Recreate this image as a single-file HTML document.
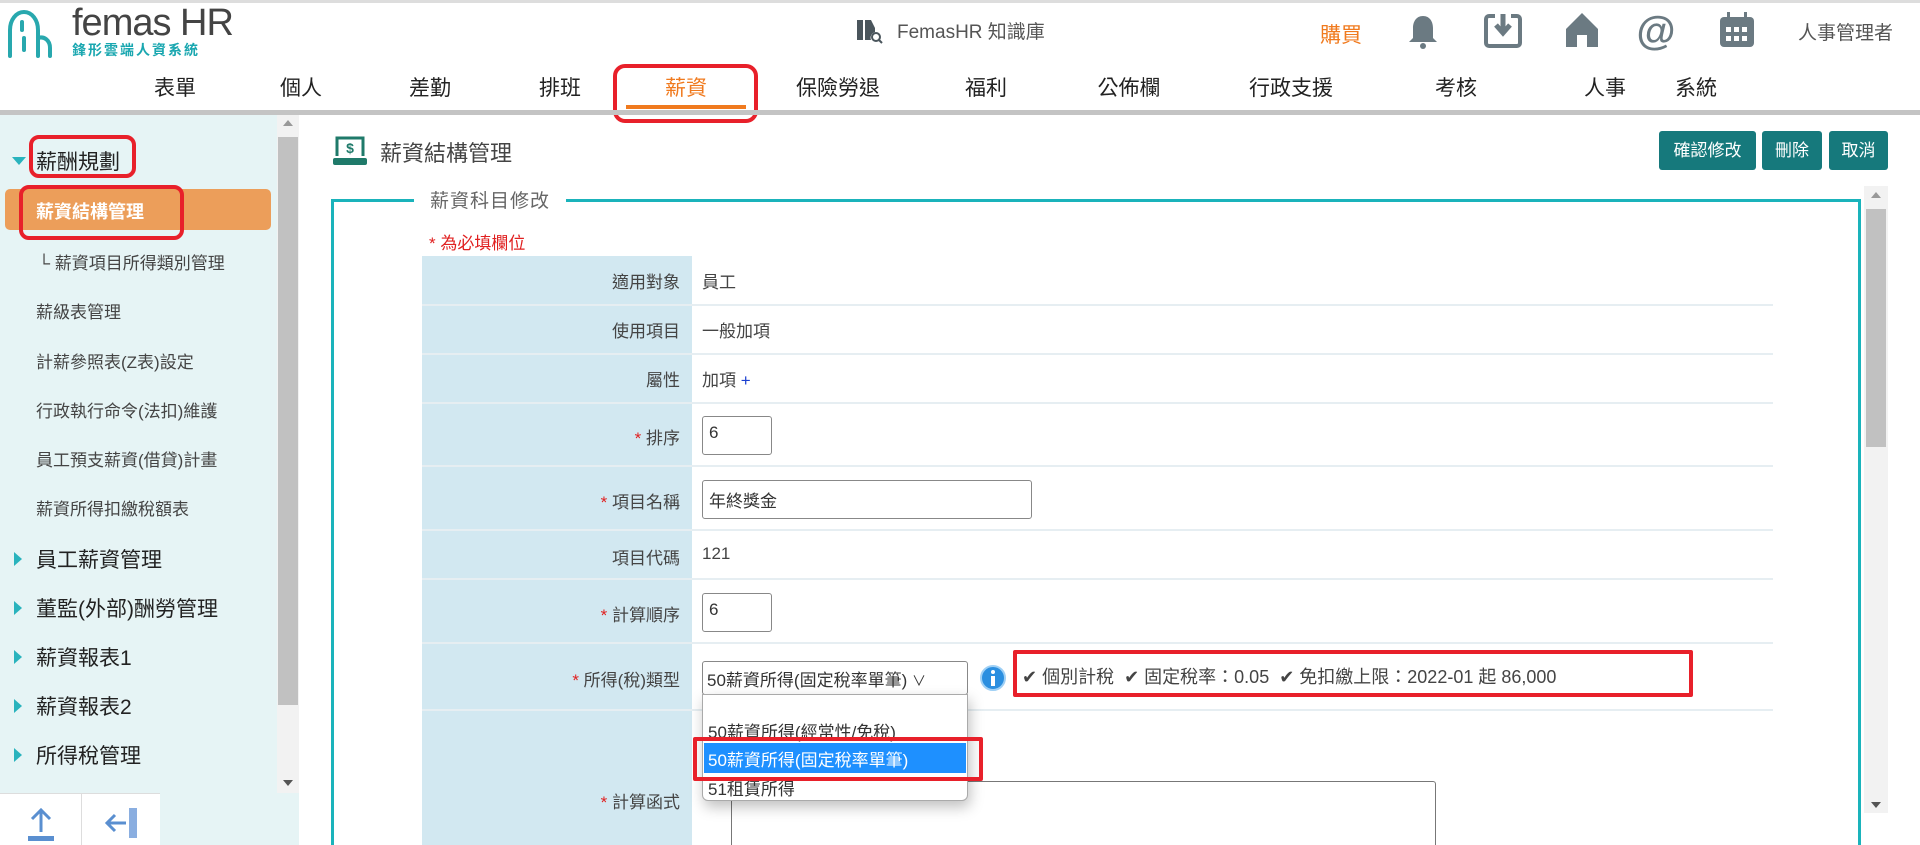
<!DOCTYPE html>
<html><head><meta charset="utf-8"><style>
*{margin:0;padding:0;box-sizing:border-box}
html,body{width:1920px;height:845px;overflow:hidden}
body{background:#fff;font-family:"Liberation Sans","Noto Sans CJK TC",sans-serif;color:#333}
#w{position:relative;width:1920px;height:845px;overflow:hidden}
.a{position:absolute;white-space:nowrap}
.nav{font-size:21px;color:#222;top:72px;transform:translateX(-50%)}
.side{font-size:17px;color:#444;left:36px}
.grp{font-size:21px;color:#222;left:36px}
.grp:before{content:"";position:absolute;left:-22px;top:8px;border-left:8px solid #29b3bd;border-top:7px solid transparent;border-bottom:7px solid transparent}
.grp.open:before{left:-24px;top:11px;border-top:8px solid #29b3bd;border-left:7px solid transparent;border-right:7px solid transparent;border-bottom:0}
.lbl{font-size:17px;color:#444;right:1240px;text-align:right}
.val{font-size:17px;color:#444;left:702px}
.st{color:#e02020}
.inp{position:absolute;border:1px solid #888;border-radius:3px;background:#fff;font-size:17px;padding:6px 6px;color:#333}
.btn{position:absolute;top:131px;height:39px;background:#16797c;color:#fff;font-size:17px;border-radius:3px;text-align:center;line-height:39px}
.red{position:absolute;border:4px solid #e8202a;border-radius:6px}
</style></head><body><div id="w">
<div class="a" style="left:0;top:0;width:1920px;height:3px;background:#ddd"></div>
<svg class="a" style="left:4px;top:8px" width="56" height="52" viewBox="0 0 56 52"><path d="M6 48V22M6 22c0-10 6-18 14-18s14 8 14 18v26M18 14v8M20 30v12M34 30c6-2 12 2 12 10v8" stroke="#28a8ae" stroke-width="4" fill="none" stroke-linecap="round"/></svg>
<div class="a" style="left:72px;top:2px;font-size:38px;color:#444;letter-spacing:-1px">femas HR</div>
<div class="a" style="left:72px;top:40px;font-size:14px;color:#1aa7b0;font-weight:bold;letter-spacing:2px">鋒形雲端人資系統</div>
<svg class="a" style="left:855px;top:16px" width="28" height="28" viewBox="0 0 28 28"><path d="M2 4h6v20H2zM10 4h6l4 8v4a6 6 0 0 0-4 8h-6z" fill="#4a555c"/><circle cx="21" cy="21" r="4" stroke="#4a555c" stroke-width="2" fill="none"/><path d="M24 24l3 3" stroke="#4a555c" stroke-width="2"/></svg>
<div class="a" style="left:897px;top:17px;font-size:19px;color:#555">FemasHR 知識庫</div>
<div class="a" style="left:1320px;top:19px;font-size:21px;color:#f07a1e">購買</div>
<svg class="a" style="left:1407px;top:14px" width="32" height="36" viewBox="0 0 32 36"><path d="M16 2c-7 0-10 6-10 12v10l-4 4h28l-4-4V14c0-6-3-12-10-12z" fill="#6b7a82"/><circle cx="16" cy="32" r="3" fill="#6b7a82"/></svg>
<svg class="a" style="left:1484px;top:12px" width="38" height="36" viewBox="0 0 38 36"><path d="M11 4H5a3 3 0 0 0-3 3v24a3 3 0 0 0 3 3h28a3 3 0 0 0 3-3V7a3 3 0 0 0-3-3h-6" stroke="#6b7a82" stroke-width="4" fill="none"/><path d="M19 2v16M12 13l7 8 7-8" stroke="#6b7a82" stroke-width="5" fill="none"/></svg>
<svg class="a" style="left:1563px;top:11px" width="38" height="38" viewBox="0 0 38 38"><path d="M19 2L3 18v18h11V24h10v12h11V18z" fill="#6b7a82"/></svg>
<svg class="a" style="left:1636px;top:11px" width="40" height="40" viewBox="0 0 40 40"><text x="20" y="33" text-anchor="middle" font-size="40" font-weight="bold" fill="#6b7a82" font-family="Liberation Sans">@</text></svg>
<svg class="a" style="left:1718px;top:11px" width="38" height="38" viewBox="0 0 38 38"><rect x="2" y="6" width="34" height="30" rx="4" fill="#6b7a82"/><rect x="9" y="1" width="3" height="8" fill="#6b7a82"/><rect x="26" y="1" width="3" height="8" fill="#6b7a82"/><g fill="#fff"><rect x="8" y="16" width="5" height="5"/><rect x="16" y="16" width="5" height="5"/><rect x="24" y="16" width="5" height="5"/><rect x="8" y="25" width="5" height="5"/><rect x="16" y="25" width="5" height="5"/><rect x="24" y="25" width="5" height="5"/></g></svg>
<div class="a" style="left:1798px;top:18px;font-size:19px;color:#555">人事管理者</div>
<div class="a nav" style="left:175px">表單</div>
<div class="a nav" style="left:301px">個人</div>
<div class="a nav" style="left:430px">差勤</div>
<div class="a nav" style="left:560px">排班</div>
<div class="a nav" style="left:686px;color:#f07a1e">薪資</div>
<div class="a nav" style="left:838px">保險勞退</div>
<div class="a nav" style="left:986px">福利</div>
<div class="a nav" style="left:1129px">公佈欄</div>
<div class="a nav" style="left:1291px">行政支援</div>
<div class="a nav" style="left:1456px">考核</div>
<div class="a nav" style="left:1605px">人事</div>
<div class="a nav" style="left:1696px">系統</div>
<div class="a" style="left:626px;top:105px;width:120px;height:4px;background:#f07a1e"></div>
<div class="red" style="left:613px;top:64px;width:145px;height:59px;border-radius:12px"></div>
<div class="a" style="left:0;top:110px;width:1920px;height:5px;background:#c4c4c4"></div>
<div class="a" style="left:0;top:115px;width:299px;height:730px;background:#e6f4f5"></div>
<div class="a" style="left:277px;top:115px;width:22px;height:678px;background:#f2f2f2"></div>
<div class="a" style="left:278px;top:137px;width:20px;height:568px;background:#c1c1c1"></div>
<div class="a" style="left:283px;top:120px;border-bottom:6px solid #999;border-left:5px solid transparent;border-right:5px solid transparent"></div>
<div class="a" style="left:283px;top:780px;border-top:6px solid #555;border-left:5px solid transparent;border-right:5px solid transparent"></div>
<div class="a grp open" style="top:146px">薪酬規劃</div>
<div class="red" style="left:29px;top:135px;width:107px;height:43px;border-radius:10px"></div>
<div class="a" style="left:5px;top:189px;width:266px;height:41px;background:#ec9e5a;border-radius:5px"></div>
<div class="a" style="left:36px;top:198px;font-size:18px;color:#fff;font-weight:bold">薪資結構管理</div>
<div class="red" style="left:19px;top:185px;width:165px;height:55px;border-radius:10px"></div>
<div class="a side" style="top:249px;left:38px">└ 薪資項目所得類別管理</div>
<div class="a side" style="top:298px">薪級表管理</div>
<div class="a side" style="top:348px">計薪參照表(Z表)設定</div>
<div class="a side" style="top:397px">行政執行命令(法扣)維護</div>
<div class="a side" style="top:446px">員工預支薪資(借貸)計畫</div>
<div class="a side" style="top:495px">薪資所得扣繳稅額表</div>
<div class="a grp" style="top:544px">員工薪資管理</div>
<div class="a grp" style="top:593px">董監(外部)酬勞管理</div>
<div class="a grp" style="top:642px">薪資報表1</div>
<div class="a grp" style="top:691px">薪資報表2</div>
<div class="a grp" style="top:740px">所得稅管理</div>
<div class="a grp" style="top:789px;height:4px;overflow:hidden">基本設定</div>
<div class="a" style="left:0;top:793px;width:160px;height:52px;background:#fff;border-top:1px solid #ddd"></div>
<div class="a" style="left:81px;top:793px;width:1px;height:52px;background:#ddd"></div>
<svg class="a" style="left:26px;top:808px" width="30" height="34" viewBox="0 0 30 34"><path d="M15 2v22M6 11l9-9 9 9" stroke="#5a8fd0" stroke-width="3" fill="none"/><rect x="2" y="28" width="26" height="5" fill="#5a8fd0"/></svg>
<svg class="a" style="left:104px;top:806px" width="36" height="34" viewBox="0 0 36 34"><path d="M4 17h18M11 9l-8 8 8 8" stroke="#5a8fd0" stroke-width="3" fill="none"/><rect x="25" y="2" width="8" height="30" fill="#8aaee0"/></svg>
<svg class="a" style="left:332px;top:134px" width="36" height="32" viewBox="0 0 36 32"><path d="M5 22V4h26v18" stroke="#1f7a6a" stroke-width="3" fill="none"/><rect x="1" y="24" width="34" height="7" rx="2" fill="#1f7a6a"/><text x="18" y="19" text-anchor="middle" font-size="14" font-weight="bold" fill="#1f7a6a" font-family="Liberation Sans">$</text></svg>
<div class="a" style="left:380px;top:136px;font-size:22px;color:#444">薪資結構管理</div>
<div class="btn" style="left:1659px;width:97px">確認修改</div>
<div class="btn" style="left:1762px;width:60px">刪除</div>
<div class="btn" style="left:1829px;width:59px">取消</div>
<div class="a" style="left:331px;top:199px;width:1530px;height:646px;border:3px solid #1ab3bb;border-bottom:0"></div>
<div class="a" style="left:414px;top:186px;background:#fff;padding:0 16px;font-size:19px;color:#666;letter-spacing:1px">薪資科目修改</div>
<div class="a" style="left:1864px;top:186px;width:24px;height:627px;background:#f2f2f2"></div>
<div class="a" style="left:1866px;top:209px;width:20px;height:238px;background:#c1c1c1"></div>
<div class="a" style="left:1871px;top:192px;border-bottom:6px solid #999;border-left:5px solid transparent;border-right:5px solid transparent"></div>
<div class="a" style="left:1871px;top:802px;border-top:6px solid #555;border-left:5px solid transparent;border-right:5px solid transparent"></div>
<div class="a" style="left:429px;top:229px;font-size:17px;color:#e02020">* 為必填欄位</div>
<div class="a" style="left:422px;top:256px;width:270px;height:589px;background:#d2e8f1"></div>
<div class="a" style="left:422px;top:304px;width:1351px;height:2px;background:#e6eef2"></div>
<div class="a" style="left:422px;top:353px;width:1351px;height:2px;background:#e6eef2"></div>
<div class="a" style="left:422px;top:402px;width:1351px;height:2px;background:#e6eef2"></div>
<div class="a" style="left:422px;top:465px;width:1351px;height:2px;background:#e6eef2"></div>
<div class="a" style="left:422px;top:529px;width:1351px;height:2px;background:#e6eef2"></div>
<div class="a" style="left:422px;top:578px;width:1351px;height:2px;background:#e6eef2"></div>
<div class="a" style="left:422px;top:642px;width:1351px;height:2px;background:#e6eef2"></div>
<div class="a" style="left:422px;top:709px;width:1351px;height:2px;background:#e6eef2"></div>
<div class="a lbl" style="top:268px">適用對象</div><div class="a val" style="top:268px">員工</div>
<div class="a lbl" style="top:317px">使用項目</div><div class="a val" style="top:317px">一般加項</div>
<div class="a lbl" style="top:366px">屬性</div><div class="a val" style="top:366px">加項 <span style="color:#1a3fd0">+</span></div>
<div class="a lbl" style="top:424px"><span class="st">*</span> 排序</div>
<div class="inp" style="left:702px;top:416px;width:70px;height:39px">6</div>
<div class="a lbl" style="top:488px"><span class="st">*</span> 項目名稱</div>
<div class="inp" style="left:702px;top:480px;width:330px;height:39px">年終獎金</div>
<div class="a lbl" style="top:544px">項目代碼</div><div class="a val" style="top:544px">121</div>
<div class="a lbl" style="top:601px"><span class="st">*</span> 計算順序</div>
<div class="inp" style="left:702px;top:593px;width:70px;height:39px">6</div>
<div class="a lbl" style="top:666px"><span class="st">*</span> 所得(稅)類型</div>
<div class="inp" style="left:702px;top:661px;width:266px;height:34px;padding:4px 4px;font-size:17px">50薪資所得(固定稅率單筆) <span style="font-size:14px">&#8744;</span></div>
<svg class="a" style="left:979px;top:664px" width="28" height="28" viewBox="0 0 28 28"><circle cx="14" cy="14" r="12" fill="#2b8fe0" stroke="#9fd0f5" stroke-width="2"/><circle cx="14" cy="8" r="2" fill="#fff"/><rect x="12" y="12" width="4" height="10" fill="#fff"/></svg>
<div class="a" style="left:1022px;top:663px;font-size:18px;color:#444">✔ 個別計稅 &nbsp;✔ 固定稅率：0.05 &nbsp;✔ 免扣繳上限：2022-01 起 86,000</div>
<div class="red" style="left:1013px;top:650px;width:680px;height:47px;border-radius:2px"></div>
<div class="inp" style="left:731px;top:781px;width:705px;height:64px;border-color:#777;border-bottom:0;border-radius:3px 3px 0 0"></div>
<div class="a lbl" style="top:788px"><span class="st">*</span> 計算函式</div>
<div class="a" style="left:702px;top:694px;width:266px;height:107px;background:#fff;border:1px solid #aaa;border-radius:0 0 6px 6px;box-shadow:2px 6px 14px rgba(0,0,0,.25)"></div>
<div class="a" style="left:708px;top:718px;font-size:17px;color:#333">50薪資所得(經常性/免稅)</div>
<div class="a" style="left:704px;top:743px;width:262px;height:30px;background:#1e90ff"></div>
<div class="a" style="left:708px;top:746px;font-size:17px;color:#fff">50薪資所得(固定稅率單筆)</div>
<div class="a" style="left:708px;top:775px;font-size:17px;color:#333;height:23px;overflow:hidden">51租賃所得</div>
<div class="red" style="left:693px;top:737px;width:290px;height:44px;border-radius:2px"></div>
</div></body></html>
